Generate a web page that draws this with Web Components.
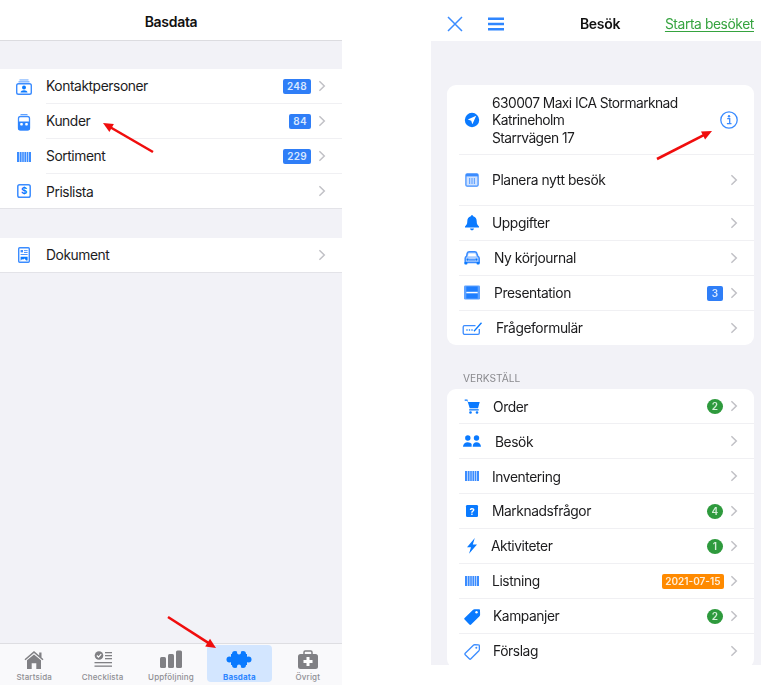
<!DOCTYPE html>
<html lang="sv">
<head>
<meta charset="utf-8">
<title>Basdata</title>
<style>
  html, body { margin: 0; padding: 0; background: #fff; }
  body { font-family: Inter, "Liberation Sans", sans-serif; }
  #page { position: relative; display: flex; width: 761px; height: 685px; overflow: hidden; filter: blur(.35px); }
</style>
</head>
<body>
<div id="page">
  <phone-screen style="--screen-w:342px; --screen-h:685px">
    <nav-bar style="--nav-h:40px; --nav-border-w:1px">Basdata</nav-bar>
    <list-group style="--group-top:28px; --gutter:46px; --icon-w:0px; --label-top:1px" plain>
      <list-row badge="248"><app-icon slot="gutter" name="contacts"></app-icon>Kontaktpersoner</list-row>
      <list-row badge="84"><app-icon slot="gutter" name="customers"></app-icon>Kunder</list-row>
      <list-row badge="229"><app-icon slot="gutter" name="barcode"></app-icon>Sortiment</list-row>
      <list-row style="--label-top:3px"><app-icon slot="gutter" name="price"></app-icon>Prislista</list-row>
    </list-group>
    <list-group style="--group-top:29px; --gutter:46px; --icon-w:0px; --label-top:1px" plain>
      <list-row><app-icon slot="gutter" name="document"></app-icon>Dokument</list-row>
    </list-group>
    <tab-bar>
      <tab-item icon="home">Startsida</tab-item>
      <tab-item icon="checklist">Checklista</tab-item>
      <tab-item icon="bars">Uppföljning</tab-item>
      <tab-item icon="puzzle" active>Basdata</tab-item>
      <tab-item icon="kit">Övrigt</tab-item>
    </tab-bar>
  </phone-screen>

  <phone-screen style="--screen-w:330px; --screen-h:665px; margin-left:89px">
    <nav-bar style="--nav-h:41px; --nav-top:6px; --title-shift:8px">
      <app-icon slot="left" name="close"></app-icon>
      <app-icon slot="left" name="menu" style="margin-left:15px"></app-icon>
      Besök
      <nav-link slot="right">Starta besöket</nav-link>
    </nav-bar>
    <list-group style="--group-top:44px; --gutter:12px; --icon-w:33px; --label-top:2px" card>
      <list-row no-chevron style="--row-h:70px; --label-ls:-.55px; --label-top:3px">
        <app-icon slot="icon" name="location"></app-icon>
        630007 Maxi ICA Stormarknad<br>Katrineholm<br>Starrvägen 17
        <app-icon slot="end" name="info" style="margin-right:-2px"></app-icon>
      </list-row>
      <list-row style="--row-h:51px"><app-icon slot="icon" name="calendar"></app-icon>Planera nytt besök</list-row>
      <list-row style="--icon-w:33px"><app-icon slot="icon" name="bell"></app-icon>Uppgifter</list-row>
      <list-row style="--icon-w:35px"><app-icon slot="icon" name="car"></app-icon>Ny körjournal</list-row>
      <list-row style="--icon-w:35px" badge="3"><app-icon slot="icon" name="film"></app-icon>Presentation</list-row>
      <list-row style="--icon-w:37px"><app-icon slot="icon" name="form"></app-icon>Frågeformulär</list-row>
    </list-group>
    <section-label>VERKSTÄLL</section-label>
    <list-group style="--gutter:12px; --icon-w:33px; --label-top:2px" card>
      <list-row style="--icon-w:34px; --label-top:4px" badge="2" kind="green"><app-icon slot="icon" name="cart"></app-icon>Order</list-row>
      <list-row style="--icon-w:36px; --label-top:4px"><app-icon slot="icon" name="people"></app-icon>Besök</list-row>
      <list-row style="--label-top:4px"><app-icon slot="icon" name="barcode"></app-icon>Inventering</list-row>
      <list-row badge="4" kind="green"><app-icon slot="icon" name="question"></app-icon>Marknadsfrågor</list-row>
      <list-row style="--icon-w:32px" badge="1" kind="green"><app-icon slot="icon" name="bolt"></app-icon>Aktiviteter</list-row>
      <list-row badge="2021-07-15" kind="orange"><app-icon slot="icon" name="barcode"></app-icon>Listning</list-row>
      <list-row style="--icon-w:34px" badge="2" kind="green"><app-icon slot="icon" name="tag"></app-icon>Kampanjer</list-row>
      <list-row style="--icon-w:34px"><app-icon slot="icon" name="tag-outline"></app-icon>Förslag</list-row>
    </list-group>
  </phone-screen>

  <pointer-arrow from="153,152" to="103,123"></pointer-arrow>
  <pointer-arrow from="168,617" to="216,648"></pointer-arrow>
  <pointer-arrow from="657,159" to="712,131"></pointer-arrow>
</div>

<script>
const BLUE = '#0a7aff'
const SOFT = '#3b8cff'
const GREY = '#808084'

// every icon sits in a 26x26 box, 1 unit = 1px
const ICONS = {
  contacts: `<rect x="5.7" y="9.7" width="14.6" height="10.6" rx="1.8" fill="none" stroke="${SOFT}" stroke-width="1.4"/>
    <circle cx="13" cy="13.4" r="2" fill="${BLUE}"/><path d="M9.5 18.6c.3-3 6.7-3 7 0z" fill="${BLUE}"/>
    <rect x="8.5" y="5.4" width="9" height="1.1" fill="${SOFT}" opacity=".7"/><rect x="7.5" y="7.3" width="11" height="1.1" fill="${SOFT}" opacity=".8"/>`,
  customers: `<rect x="9.5" y="5" width="7" height="1.1" fill="${SOFT}" opacity=".8"/>
    <rect x="7.5" y="7.5" width="11" height="13.5" rx="2" fill="none" stroke="${SOFT}" stroke-width="1.3"/>
    <rect x="7" y="12.5" width="12" height="8.5" rx="1.4" fill="#2c84ff"/>
    <rect x="9.2" y="14" width="2.6" height="2.6" rx=".8" fill="#fff"/><rect x="14.2" y="14" width="2.6" height="2.6" rx=".8" fill="#fff"/>`,
  barcode: `<g fill="${SOFT}"><rect x="6" y="8" width="2.4" height="10"/><rect x="9" y="8" width="1.6" height="10"/><rect x="11.2" y="8" width="1.6" height="10"/><rect x="13.4" y="8" width="2" height="10"/><rect x="16" y="8" width="1.4" height="10"/><rect x="18" y="8" width="2" height="10"/></g>`,
  price: `<rect x="6.8" y="6.8" width="12.4" height="12.4" rx="1.8" fill="none" stroke="${SOFT}" stroke-width="1.5"/>
    <text x="13" y="16.4" text-anchor="middle" font-size="9.5" font-weight="700" font-family="Inter, sans-serif" fill="${BLUE}">$</text>`,
  document: `<rect x="7.7" y="5.7" width="10.6" height="14.6" rx="1" fill="none" stroke="${SOFT}" stroke-width="1.4"/>
    <rect x="9.6" y="8" width="2.4" height="2.4" fill="${SOFT}"/><rect x="13" y="8.2" width="3.6" height=".9" fill="${SOFT}"/><rect x="13" y="10" width="3.6" height=".9" fill="${SOFT}"/>
    <rect x="9.6" y="12" width="7" height=".9" fill="${SOFT}"/><path d="M9.6 18.4v-3.6h7v3.6h-1.5l-1.6-2-1.5 1.3-.9-.7-1.2 1.4z" fill="${BLUE}"/>`,
  location: `<circle cx="13" cy="13" r="7.2" fill="${BLUE}"/><path d="M17.2 8.8l-8.4 3.7 3.4 1.2 1.2 3.5z" fill="#fff"/>`,
  info: `<circle cx="13" cy="13" r="8.2" fill="none" stroke="${SOFT}" stroke-width="1.3"/><circle cx="13" cy="9.2" r="1.2" fill="${SOFT}"/><path d="M11.2 11.7h2.5v5M10.9 16.7h4.6" fill="none" stroke="${SOFT}" stroke-width="1.3"/>`,
  calendar: `<rect x="6.3" y="6.3" width="13.4" height="13.4" rx="1.8" fill="${SOFT}"/>
    <rect x="7.5" y="9.4" width="11" height="9.1" fill="#cfe2ff"/><g fill="${SOFT}" opacity=".7"><rect x="10" y="11" width="1.2" height="6"/><rect x="12.4" y="11" width="1.2" height="6"/><rect x="14.8" y="11" width="1.2" height="6"/></g>`,
  bell: `<path d="M13 5.2c.8 0 1.2.5 1.2 1.1 2.3.6 3.5 2.6 3.5 5 0 3 1 4 2.3 5.2v1H6v-1c1.3-1.2 2.3-2.2 2.3-5.2 0-2.4 1.2-4.4 3.5-5 0-.6.4-1.1 1.2-1.1zM11 18.5h4c-.2 1.2-1 1.8-2 1.8s-1.8-.6-2-1.8z" fill="${BLUE}"/>`,
  car: `<path d="M8.2 8.3c.3-1 1-1.5 2-1.5h5.600c1 0 1.7.5 2 1.5l1 2.800c.9.5 1.4 1.200 1.4 2.200v4.200h-14v-4.200c0-1 .5-1.700 1.400-2.200z" fill="#a9ccff" stroke="${SOFT}" stroke-width="1.5"/>
    <path d="M8.8 11.2l.9-2.800h6.600l.9 2.800z" fill="#fff"/><rect x="9.8" y="14.2" width="6.4" height="1.3" fill="${SOFT}"/><circle cx="8.6" cy="14.6" r="1.1" fill="${BLUE}"/><circle cx="17.4" cy="14.6" r="1.1" fill="${BLUE}"/>
    <rect x="5.4" y="17" width="3" height="2.6" rx=".8" fill="${BLUE}"/><rect x="17.6" y="17" width="3" height="2.6" rx=".8" fill="${BLUE}"/>`,
  film: `<rect x="5" y="5.5" width="16" height="14" rx="1.2" fill="#5ea2ff"/><rect x="7.3" y="6.5" width="11.4" height="12" fill="#1f7fff"/><rect x="7.3" y="11.8" width="11.4" height="1.5" fill="#fff"/>`,
  form: `<path d="M16.5 10.7H5.500c-.8 0-1.300.5-1.300 1.300v6c0 .8.5 1.300 1.300 1.300h13.500c.8 0 1.300-.5 1.300-1.300v-4" fill="none" stroke="${SOFT}" stroke-width="1.3"/>
    <g fill="${BLUE}"><circle cx="8" cy="15" r=".8"/><circle cx="10.5" cy="15" r=".8"/><circle cx="13" cy="15" r=".8"/></g><path d="M15 16.2l7.500-8.500" fill="none" stroke="${BLUE}" stroke-width="1.3"/>`,
  cart: `<g transform="translate(.7 .7)"><path d="M5 5.800h2.700l.8 2.400h11.500l-1.700 6.300H10l-2.300-7.500H5z" fill="${BLUE}"/><rect x="9.500" y="15.500" width="9.500" height="1.300" fill="${BLUE}"/><circle cx="10.800" cy="18.800" r="1.300" fill="${BLUE}"/><circle cx="17.300" cy="18.800" r="1.300" fill="${BLUE}"/></g>`,
  people: `<g fill="${BLUE}"><circle cx="8.800" cy="10" r="2.700"/><circle cx="17.500" cy="10" r="2.700"/><path d="M4 18.800c0-2.700 2-4.600 4.800-4.600 1.600 0 3 .7 3.800 1.800v2.800z"/><path d="M13.700 18.800c0-3 1.400-4.600 3.800-4.600S22 16 22 18.800z"/></g>`,
  question: `<rect x="7" y="7" width="12" height="12" rx="1.3" fill="${BLUE}"/><text x="13" y="16.6" text-anchor="middle" font-size="9.5" font-weight="700" font-family="Inter, sans-serif" fill="#fff">?</text>`,
  bolt: `<path d="M15.8 5L8 14.2h4L10 20.800 18 11.600h-4.200z" fill="${BLUE}"/>`,
  tag: `<path d="M5.600 15l8.500-8.200c.4-.4.800-.6 1.400-.6l4.700.1c.5 0 .8.300.8.800l.1 4.700c0 .6-.2 1-.6 1.400l-8.400 8.300c-.5.500-1.200.5-1.700 0l-4.800-4.900c-.5-.5-.5-1.200 0-1.600z" fill="${BLUE}"/><circle cx="17.5" cy="9.2" r="1.2" fill="#fff"/>`,
  'tag-outline': `<path d="M6.200 15.200l8.200-8c.4-.4.800-.5 1.300-.5l4 .1c.4 0 .6.200.6.600l.1 4c0 .5-.2.900-.5 1.300l-8 8.100c-.5.500-1.100.5-1.600 0l-4.100-4c-.5-.5-.5-1.100 0-1.600z" fill="none" stroke="${SOFT}" stroke-width="1.3"/><circle cx="17.3" cy="9.7" r="1" fill="${SOFT}"/>`,
  close: `<path d="M6 6l14 14M20 6L6 20" fill="none" stroke="${SOFT}" stroke-width="1.5"/>`,
  menu: `<path d="M5 7.800h16M5 13h16M5 18.200h16" fill="none" stroke="#2f86ff" stroke-width="2.4"/>`,
  chevron: `<path d="M10.400 8.200l4.900 4.800-4.900 4.800" fill="none" stroke="#c1c1c6" stroke-width="1.5"/>`,
  home: `<g transform="translate(0 3)" fill="${GREY}"><path d="M3.500 11.200L13 3l5.200 4.500V4.500h2.300v5L22.500 11.200l-1 1.100L13 5 4.500 12.300z"/><path d="M6 12.300L13 6.400l7 5.900V21h-4.700v-5.800h-4.600V21H6z"/></g>`,
  checklist: `<circle cx="9" cy="10.500" r="4.300" fill="${GREY}"/><path d="M6.900 10.500l1.600 1.600 2.700-2.900" fill="none" stroke="#fff" stroke-width="1.2"/><g fill="${GREY}"><rect x="15" y="7" width="7" height="1.3"/><rect x="15" y="10" width="7" height="1.3"/><rect x="15" y="13" width="7" height="1.3"/><rect x="4.500" y="17" width="17.500" height="1.3"/><rect x="4.500" y="20.500" width="17.500" height="1.3"/></g>`,
  bars: `<g transform="translate(0 2.500)" fill="${GREY}"><rect x="2" y="9.500" width="6" height="11" rx="1.500"/><rect x="10" y="6.500" width="6" height="14" rx="1.500"/><rect x="18" y="3" width="6" height="17.500" rx="1.500"/></g>`,
  puzzle: `<g fill="${BLUE}"><rect x="5" y="9" width="16" height="11"/><circle cx="3.500" cy="14.500" r="3"/><circle cx="22.500" cy="14.500" r="3"/><circle cx="9" cy="9" r="3"/><circle cx="17" cy="9" r="3"/><circle cx="9" cy="20" r="3"/><circle cx="17" cy="20" r="3"/></g><circle cx="13" cy="7.500" r="2" fill="#d3e6ff"/><circle cx="13" cy="21.500" r="2" fill="#d3e6ff"/>`,
  kit: `<g transform="translate(0 3)"><path d="M9 6V4.200C9 3.500 9.500 3 10.200 3h5.600c.7 0 1.200.5 1.200 1.200V6" fill="none" stroke="${GREY}" stroke-width="1.5"/><rect x="3" y="6" width="20" height="15" rx="2.500" fill="${GREY}"/><path d="M11.500 9h3v3h3v3h-3v3h-3v-3h-3v-3h3z" fill="#fff"/></g>`
}

const iconTemplate = document.createElement('template')
iconTemplate.innerHTML = `<style>
  :host {
    display: inline-flex;
    width: 26px;
    height: 26px;
    flex: none;
  }

  svg {
    width: 26px;
    height: 26px;
    display: block;
  }
</style>
<svg viewBox="0 0 26 26"></svg>
`

class AppIcon extends HTMLElement {
  constructor() {
    super()
    this._shadowRoot = this.attachShadow({ mode: 'open' })
    this._shadowRoot.appendChild(iconTemplate.content.cloneNode(true))
    this.$svg = this._shadowRoot.querySelector('svg')
  }

  connectedCallback() {
    this.$svg.innerHTML = ICONS[this.getAttribute('name')] || ''
  }
}

customElements.define('app-icon', AppIcon)

const screenTemplate = document.createElement('template')
screenTemplate.innerHTML = `<style>
  :host {
    display: flex;
    flex-direction: column;
    flex: none;
    width: var(--screen-w);
    height: var(--screen-h);
    overflow: hidden;
    background: #f2f2f7;
    color: #1c1c1e;
  }
</style>
<slot></slot>
`

class PhoneScreen extends HTMLElement {
  constructor() {
    super()
    this.attachShadow({ mode: 'open' }).appendChild(screenTemplate.content.cloneNode(true))
  }
}

customElements.define('phone-screen', PhoneScreen)

const navTemplate = document.createElement('template')
navTemplate.innerHTML = `<style>
  :host {
    display: grid;
    grid-template-columns: 1fr auto 1fr;
    align-items: center;
    flex: none;
    height: calc(var(--nav-h) - var(--nav-top, 2px));
    padding-top: var(--nav-top, 2px);
    background: #fff;
    border-bottom: var(--nav-border-w, 0) solid #dcdce0;
  }

  .title {
    margin-left: var(--title-shift, 0);
    font-size: 14px;
    font-weight: 600;
    letter-spacing: -.3px;
    color: #111;
  }

  .left {
    display: flex;
    align-items: center;
    padding-left: 11px;
  }

  .right {
    display: flex;
    justify-content: flex-end;
    padding-right: 7px;
  }
</style>
<div class="left"><slot name="left"></slot></div>
<div class="title"><slot></slot></div>
<div class="right"><slot name="right"></slot></div>
`

class NavBar extends HTMLElement {
  constructor() {
    super()
    this.attachShadow({ mode: 'open' }).appendChild(navTemplate.content.cloneNode(true))
  }
}

customElements.define('nav-bar', NavBar)

const linkTemplate = document.createElement('template')
linkTemplate.innerHTML = `<style>
  :host {
    display: inline-block;
    font-size: 13.8px;
    letter-spacing: -.4px;
    color: #35a33f;
    text-decoration: underline;
    text-underline-offset: 2px;
    text-decoration-thickness: 1px;
  }
</style>
<slot></slot>
`

class NavLink extends HTMLElement {
  constructor() {
    super()
    this.attachShadow({ mode: 'open' }).appendChild(linkTemplate.content.cloneNode(true))
  }
}

customElements.define('nav-link', NavLink)

const groupTemplate = document.createElement('template')
groupTemplate.innerHTML = `<style>
  :host {
    display: block;
    flex: none;
    margin-top: var(--group-top, 0);
    background: #fff;
  }

  :host([plain]) {
    border-bottom: 1px solid #e3e3e8;
  }

  :host([card]) {
    margin-left: 16px;
    margin-right: 7px;
    border-radius: 9px;
    overflow: hidden;
  }
</style>
<slot></slot>
`

class ListGroup extends HTMLElement {
  constructor() {
    super()
    this.attachShadow({ mode: 'open' }).appendChild(groupTemplate.content.cloneNode(true))
  }
}

customElements.define('list-group', ListGroup)

const rowTemplate = document.createElement('template')
rowTemplate.innerHTML = `<style>
  :host {
    display: flex;
    height: var(--row-h, 35px);
    font-size: 13.8px;
    line-height: 17.5px;
    letter-spacing: var(--label-ls, -.42px);
    color: #1c1c1e;
  }

  :host(:last-child) {
    height: 34px;
  }

  .gutter {
    display: flex;
    align-items: center;
    flex: none;
    width: var(--gutter);
  }

  ::slotted(app-icon[slot=gutter]) {
    margin-left: 11px;
  }

  .body {
    display: flex;
    flex: 1;
    min-width: 0;
    align-items: center;
    padding-right: 14px;
    border-bottom: 1px solid #f0f0f3;
  }

  :host(:last-child) .body {
    border-bottom: 0;
  }

  .icon {
    display: flex;
    align-items: center;
    flex: none;
    width: var(--icon-w);
  }

  .label {
    flex: 1;
    min-width: 0;
    padding-top: var(--label-top, 0);
    white-space: nowrap;
  }

  .badge {
    display: none;
    box-sizing: border-box;
    height: 15px;
    min-width: 16px;
    margin-right: 5px;
    padding: 0 4px;
    border-radius: 2px;
    font-size: 10px;
    font-weight: 600;
    line-height: 15px;
    text-align: center;
    letter-spacing: .3px;
    color: #d8e7ff;
    background: #2f7ef7;
  }

  .badge.on {
    display: block;
  }

  .badge.green {
    width: 16px;
    padding: 0;
    border-radius: 50%;
    color: #d5eed8;
    background: #2e9a3d;
  }

  .badge.orange {
    margin-right: 4px;
    padding: 0 3.5px;
    letter-spacing: 0;
    color: #ffeed8;
    background: #ff8a00;
  }

  .badge.single {
    padding: 0;
  }

  .chevron {
    margin: 0 -7px 0 -7px;
  }
</style>
<div class="gutter"><slot name="gutter"></slot></div>
<div class="body">
  <div class="icon"><slot name="icon"></slot></div>
  <div class="label"><slot></slot></div>
  <slot name="end"></slot>
  <div class="badge"></div>
  <app-icon class="chevron" name="chevron"></app-icon>
</div>
`

class ListRow extends HTMLElement {
  constructor() {
    super()
    this._shadowRoot = this.attachShadow({ mode: 'open' })
    this._shadowRoot.appendChild(rowTemplate.content.cloneNode(true))
    this.$badge = this._shadowRoot.querySelector('.badge')
    this.$chevron = this._shadowRoot.querySelector('.chevron')
  }

  connectedCallback() {
    const badge = this.getAttribute('badge')
    if (badge) {
      this.$badge.innerText = badge
      this.$badge.classList.add('on')
      if (this.hasAttribute('kind')) this.$badge.classList.add(this.getAttribute('kind'))
      if (badge.length === 1) this.$badge.classList.add('single')
    }
    if (this.hasAttribute('no-chevron')) this.$chevron.style.display = 'none'
  }
}

customElements.define('list-row', ListRow)

const labelTemplate = document.createElement('template')
labelTemplate.innerHTML = `<style>
  :host {
    display: flex;
    align-items: flex-end;
    flex: none;
    box-sizing: border-box;
    height: 44px;
    padding: 0 0 4px 32px;
    font-size: 10.2px;
    line-height: 13px;
    color: #8a8a8e;
  }
</style>
<slot></slot>
`

class SectionLabel extends HTMLElement {
  constructor() {
    super()
    this.attachShadow({ mode: 'open' }).appendChild(labelTemplate.content.cloneNode(true))
  }
}

customElements.define('section-label', SectionLabel)

const tabBarTemplate = document.createElement('template')
tabBarTemplate.innerHTML = `<style>
  :host {
    display: grid;
    grid-template-columns: repeat(5, 1fr);
    flex: none;
    box-sizing: border-box;
    height: 42px;
    margin-top: auto;
    padding-top: 1px;
    background: #f9f9fb;
    border-top: 1px solid #dedee2;
  }
</style>
<slot></slot>
`

class TabBar extends HTMLElement {
  constructor() {
    super()
    this.attachShadow({ mode: 'open' }).appendChild(tabBarTemplate.content.cloneNode(true))
  }
}

customElements.define('tab-bar', TabBar)

const tabTemplate = document.createElement('template')
tabTemplate.innerHTML = `<style>
  :host {
    display: block;
    height: 37px;
  }

  .tab {
    display: flex;
    flex-direction: column;
    align-items: center;
    width: 65px;
    height: 37px;
    margin: 0 auto;
    border-radius: 4px;
    font-size: 8px;
    font-weight: 500;
    line-height: 11px;
    letter-spacing: .15px;
    color: #8e8e93;
  }

  :host([active]) .tab {
    background: #d3e6ff;
    color: #2f86ff;
    font-weight: 700;
  }

  app-icon {
    margin-bottom: .5px;
  }
</style>
<div class="tab">
  <app-icon></app-icon>
  <slot></slot>
</div>
`

class TabItem extends HTMLElement {
  constructor() {
    super()
    this._shadowRoot = this.attachShadow({ mode: 'open' })
    this._shadowRoot.appendChild(tabTemplate.content.cloneNode(true))
    this.$icon = this._shadowRoot.querySelector('app-icon')
  }

  connectedCallback() {
    this.$icon.setAttribute('name', this.getAttribute('icon'))
    this.$icon.connectedCallback()
  }
}

customElements.define('tab-item', TabItem)

// annotation arrows lie over the screens, so these are absolute
class PointerArrow extends HTMLElement {
  constructor() {
    super()
    this._shadowRoot = this.attachShadow({ mode: 'open' })
  }

  connectedCallback() {
    const [x1, y1] = this.getAttribute('from').split(',').map(Number)
    const [x2, y2] = this.getAttribute('to').split(',').map(Number)
    const angle = Math.atan2(y2 - y1, x2 - x1)
    const point = (back, side) => {
      const x = x2 - back * Math.cos(angle) - side * Math.sin(angle)
      const y = y2 - back * Math.sin(angle) + side * Math.cos(angle)
      return x.toFixed(1) + ',' + y.toFixed(1)
    }
    this._shadowRoot.innerHTML = `<style>
      :host {
        position: absolute;
        left: 0;
        top: 0;
        width: 761px;
        height: 685px;
        pointer-events: none;
      }
      svg { display: block; }
    </style>
    <svg width="761" height="685" viewBox="0 0 761 685">
      <path d="M${x1} ${y1}L${point(6, 0).replace(',', ' ')}" stroke="#f00d0d" stroke-width="2.6" fill="none"/>
      <polygon points="${x2},${y2} ${point(10, 4.5)} ${point(10, -4.5)}" fill="#f00d0d"/>
    </svg>`
  }
}

customElements.define('pointer-arrow', PointerArrow)
</script>
</body>
</html>
